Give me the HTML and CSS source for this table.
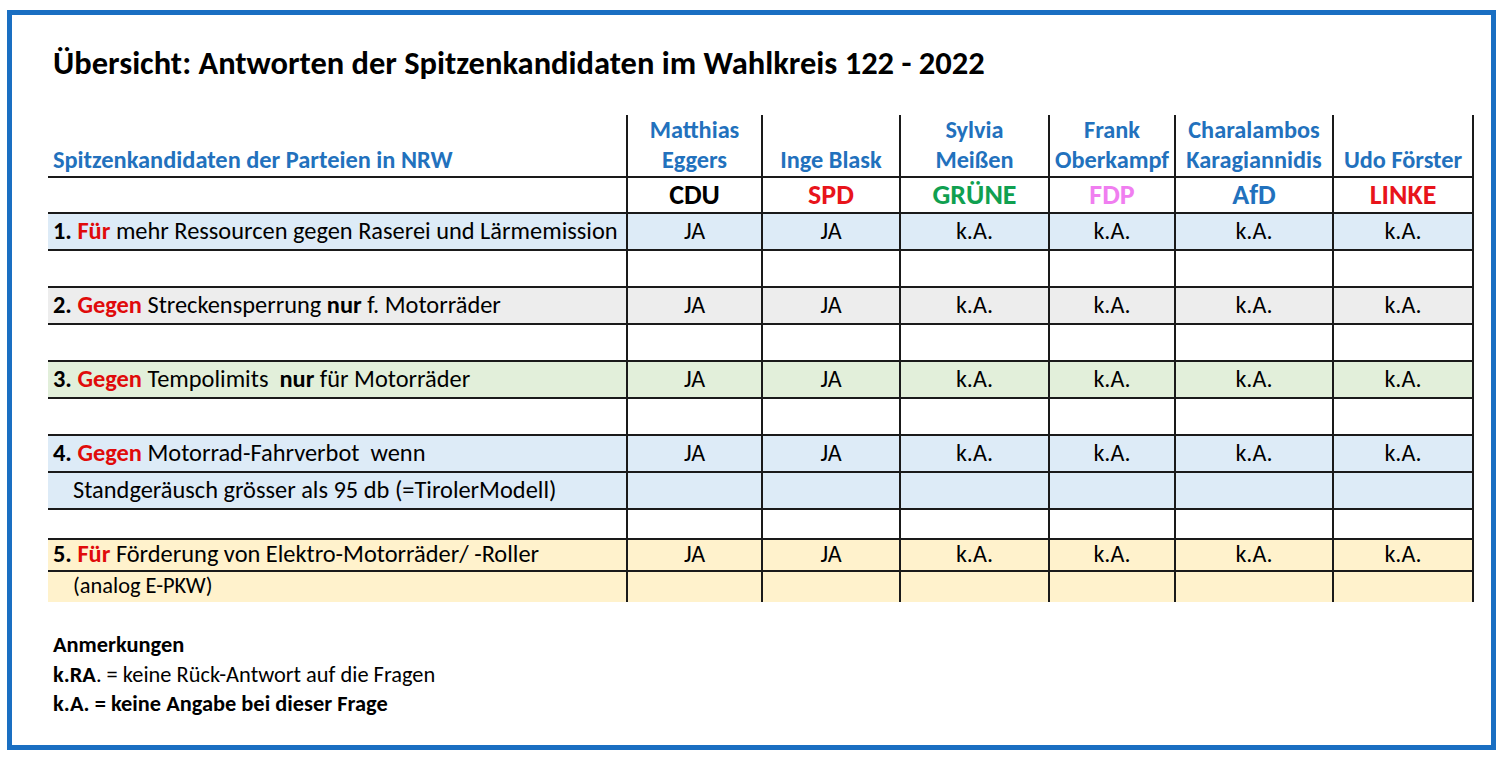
FILE: index.html
```html
<!DOCTYPE html>
<html lang="de">
<head>
<meta charset="utf-8">
<title>Übersicht Wahlkreis 122</title>
<link rel="stylesheet" href="styles.css">
</head>
<body>
<div class="frame">
  <h1 class="title">Übersicht: Antworten der Spitzenkandidaten im Wahlkreis 122 - 2022</h1>
  <table class="grid">
    <colgroup>
      <col class="c0"><col class="c1"><col class="c2"><col class="c3"><col class="c4"><col class="c5"><col class="c6">
    </colgroup>
    <tr class="head">
      <td class="label">Spitzenkandidaten der Parteien in NRW</td>
      <td>Matthias<br>Eggers</td>
      <td>Inge Blask</td>
      <td>Sylvia<br>Meißen</td>
      <td>Frank<br>Oberkampf</td>
      <td>Charalambos<br>Karagiannidis</td>
      <td>Udo Förster</td>
    </tr>
    <tr class="party">
      <td class="label"></td>
      <td class="cdu">CDU</td>
      <td class="spd">SPD</td>
      <td class="gruene">GRÜNE</td>
      <td class="fdp">FDP</td>
      <td class="afd">AfD</td>
      <td class="linke">LINKE</td>
    </tr>
    <tr class="row blue">
      <td class="label"><b>1.</b> <b class="red">Für</b> mehr Ressourcen gegen Raserei und Lärmemission</td>
      <td>JA</td><td>JA</td><td>k.A.</td><td>k.A.</td><td>k.A.</td><td>k.A.</td>
    </tr>
    <tr class="row"><td class="label"></td><td></td><td></td><td></td><td></td><td></td><td></td></tr>
    <tr class="row gray">
      <td class="label"><b>2.</b> <b class="red">Gegen</b> Streckensperrung <b>nur</b> f. Motorräder</td>
      <td>JA</td><td>JA</td><td>k.A.</td><td>k.A.</td><td>k.A.</td><td>k.A.</td>
    </tr>
    <tr class="row"><td class="label"></td><td></td><td></td><td></td><td></td><td></td><td></td></tr>
    <tr class="row green">
      <td class="label"><b>3.</b> <b class="red">Gegen</b> Tempolimits&nbsp; <b>nur</b> für Motorräder</td>
      <td>JA</td><td>JA</td><td>k.A.</td><td>k.A.</td><td>k.A.</td><td>k.A.</td>
    </tr>
    <tr class="row"><td class="label"></td><td></td><td></td><td></td><td></td><td></td><td></td></tr>
    <tr class="row blue">
      <td class="label"><b>4.</b> <b class="red">Gegen</b> Motorrad-Fahrverbot&nbsp; wenn</td>
      <td>JA</td><td>JA</td><td>k.A.</td><td>k.A.</td><td>k.A.</td><td>k.A.</td>
    </tr>
    <tr class="row blue">
      <td class="label indent">Standgeräusch grösser als 95 db (=TirolerModell)</td>
      <td></td><td></td><td></td><td></td><td></td><td></td>
    </tr>
    <tr class="row short"><td class="label"></td><td></td><td></td><td></td><td></td><td></td><td></td></tr>
    <tr class="row yellow r5">
      <td class="label"><b>5.</b> <b class="red">Für</b> Förderung von Elektro-Motorräder/ -Roller</td>
      <td>JA</td><td>JA</td><td>k.A.</td><td>k.A.</td><td>k.A.</td><td>k.A.</td>
    </tr>
    <tr class="row yellow last">
      <td class="label indent small">(analog E-PKW)</td>
      <td></td><td></td><td></td><td></td><td></td><td></td>
    </tr>
  </table>
  <div class="notes">
    <p class="strong">Anmerkungen</p>
    <p><b>k.RA</b>. = keine Rück-Antwort auf die Fragen</p>
    <p class="strong">k.A. = keine Angabe bei dieser Frage</p>
  </div>
</div>
</body>
</html>
```

FILE: styles.css
```css
* { box-sizing: border-box; }

html, body {
  margin: 0;
  padding: 0;
  background: #ffffff;
}

body {
  font-family: Carlito, Lato, "Open Sans", sans-serif;
  color: #000000;
}

.frame {
  margin: 10px 0 0 7px;
  width: 1489px;
  height: 740px;
  border: 5px solid #1a6fc2;
  padding: 31px 0 0 36px;
}

.title {
  margin: 0 0 35px 5px;
  font-size: 32.5px;
  line-height: 34px;
  font-weight: 700;
}

.grid {
  border-collapse: collapse;
  table-layout: fixed;
  width: 1425px;
  font-size: 24px;
}

.c0 { width: 579px; }
.c1 { width: 135px; }
.c2 { width: 138px; }
.c3 { width: 149px; }
.c4 { width: 126px; }
.c5 { width: 158px; }
.c6 { width: 140px; }

.grid td {
  padding: 0;
  text-align: center;
  vertical-align: middle;
  border-left: 2px solid #1a1a1a;
  border-bottom: 2px solid #1a1a1a;
  white-space: nowrap;
  line-height: 28px;
}

.grid td:last-child { border-right: 2px solid #1a1a1a; }

.grid td.label {
  border-left: none;
  text-align: left;
  padding-left: 5px;
  font-size: 24.4px;
}

.grid td.indent { padding-left: 25px; }
.grid td.small { font-size: 22.4px; }

.head td {
  height: 62px;
  vertical-align: bottom;
  color: #2271bd;
  font-weight: 700;
  font-size: 24.3px;
  line-height: 30px;
  padding-bottom: 1px;
}

.party td {
  height: 36px;
  font-weight: 700;
  font-size: 28px;
}

.cdu { color: #000000; }
.spd { color: #e8141b; }
.gruene { color: #10a050; }
.fdp { color: #f07ef0; }
.afd { color: #2271bd; }
.linke { color: #e8141b; }

.row td { height: 37px; padding-bottom: 2px; }
.row.short td { height: 30px; }
.row.r5 td { height: 32px; }
.row.last td { height: 29px; border-bottom: none; }

.blue td { background: #ddebf7; }
.gray td { background: #ededed; }
.green td { background: #e2efda; }
.yellow td { background: #fff2cc; }

.red { color: #e00b0b; }

.notes {
  margin: 28px 0 0 5px;
  font-size: 22.4px;
  line-height: 29.5px;
}

.notes p { margin: 0; }
.notes .strong { font-weight: 700; }
```
